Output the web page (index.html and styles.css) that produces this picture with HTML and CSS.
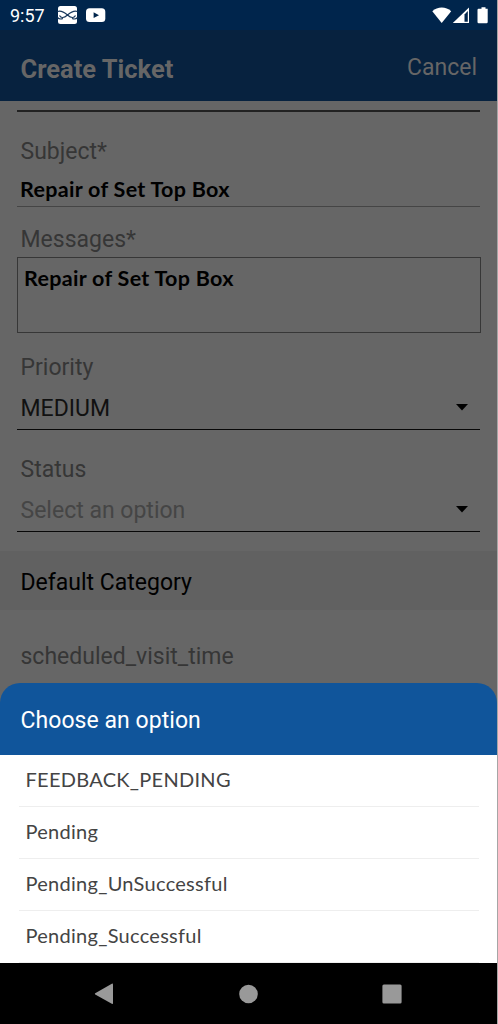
FILE: index.html
```html
<!DOCTYPE html>
<html lang="en">
<head>
<meta charset="utf-8">
<title>Create Ticket</title>
<link rel="stylesheet" href="styles.css">
</head>
<body>
<div class="phone">
  <div class="status-bar">
    <span class="clock">9:57</span>
    <svg class="notifications" width="50" height="20" viewBox="0 0 50 20">
      <rect x="1" y="0" width="19" height="18" rx="2.5" fill="#fff"/>
      <path d="M0.500 5.500C4 4 7 6 10.500 9S17 12.500 18.500 9.500M20.500 5.500C17 4 14 6 10.500 9S4 12.500 2.500 9.500M0.500 11.500C2 13.300 4 13.300 6 12.500M20.500 11.500C19 13.300 17 13.300 15 12.500" fill="none" stroke="#17375c" stroke-width="1.200"/>
      <rect x="29" y="2.300" width="19.300" height="13.800" rx="3.500" fill="#fff"/>
      <path d="M36.600 6.300v5.800l5.400-2.900z" fill="#00254c"/>
    </svg>
    <svg class="signals" width="57" height="20" viewBox="0 0 57 20">
      <path d="M0.300 4.300C5.500 -0.700 14 -0.700 19.200 4.300L9.700 16z" fill="#fff"/>
      <path d="M37 0.500V16H20.800z" fill="#fff"/>
      <path d="M32.500 7.500L35.800 4V14.800H32.500z" fill="#00254c"/>
      <path d="M46.500 1.800h3V.2h4v1.600h2.200V15q0 1.200-1.200 1.200h-7.800q-1.200 0-1.200-1.200V3q0-1.200 1-1.200z" fill="#fff"/>
    </svg>
  </div>
  <header class="header">
    <h1 class="title">Create Ticket</h1>
    <span class="cancel">Cancel</span>
  </header>
  <main class="form">
    <div class="previous-field"></div>
    <div class="label subject-label">Subject*</div>
    <div class="input"><span class="entry">Repair of Set Top Box</span></div>
    <div class="label messages-label">Messages*</div>
    <div class="textarea"><span class="entry">Repair of Set Top Box</span></div>
    <div class="label priority-label">Priority</div>
    <div class="select"><span>MEDIUM</span><svg class="caret" width="12" height="7" viewBox="0 0 12 7"><path d="M0 0h12L6 6.500z"/></svg></div>
    <div class="label status-label">Status</div>
    <div class="select"><span class="placeholder">Select an option</span><svg class="caret" width="12" height="7" viewBox="0 0 12 7"><path d="M0 0h12L6 6.500z"/></svg></div>
  </main>
  <div class="category">Default Category</div>
  <div class="visit">scheduled_visit_time</div>
  <section class="sheet">
    <div class="sheet-title">Choose an option</div>
    <ul class="options">
      <li class="option">FEEDBACK_PENDING</li>
      <li class="option">Pending</li>
      <li class="option">Pending_UnSuccessful</li>
      <li class="option">Pending_Successful</li>
    </ul>
  </section>
  <nav class="nav">
    <svg width="20" height="22" viewBox="0 0 20 22"><path d="M17.800.8Q19 .2 19 1.500v18.500q0 1.300-1.200.7L1.200 11.400q-.8-.6 0-1.200z"/></svg>
    <svg width="20" height="20" viewBox="0 0 20 20"><circle cx="10.500" cy="10" r="9.300"/></svg>
    <svg width="20" height="20" viewBox="0 0 20 20"><rect x=".4" y=".4" width="19.200" height="19.200" rx="1.500"/></svg>
  </nav>
</div>
</body>
</html>
```
FILE: styles.css
```css
* { box-sizing: border-box; }
body { margin: 0; background: #a6a6a6; }
.phone {
  width: 497px;
  height: 1024px;
  display: flex;
  flex-direction: column;
  background: #666;
  font-family: Roboto, "Liberation Sans", sans-serif;
  font-size: 23px;
  line-height: 30px;
  overflow: hidden;
  white-space: nowrap;
}
.phone > * { flex: none; }
.status-bar {
  height: 30px;
  padding: 0 8px 0 10px;
  display: flex;
  align-items: flex-start;
  background: #00254c;
  color: #fff;
}
.clock { width: 47px; font-size: 18px; line-height: 32px; }
.notifications { margin-top: 6px; }
.signals { margin: 7px 0 0 auto; }
.header {
  height: 71px;
  padding: 0 20px 0 20.500px;
  display: flex;
  justify-content: space-between;
  align-items: flex-start;
  background: #07223f;
  color: #666;
}
.title { margin: 24px 0 0; font-size: 25.500px; font-weight: 700; line-height: 30px; }
.cancel { margin-top: 23px; }
.form { padding: 0 17px; }
.previous-field { height: 11px; border-bottom: 2px solid #222; }
.label { padding-left: 3.500px; color: #363636; }
.subject-label { margin-top: 25px; }
.messages-label { margin-top: 18px; }
.priority-label { margin-top: 20px; }
.status-label { margin-top: 25px; }
.input { height: 40px; padding: 7px 0 0 3px; border-bottom: 1.500px solid #454545; }
.entry { display: inline-block; font-family: Lato, sans-serif; font-size: 21.500px; font-weight: 700; letter-spacing: .3px; color: #000; }
.textarea { height: 76px; margin: 2px -1px 0 0; padding: 5px 0 0 6px; border: 1.500px solid #373737; }
.select {
  height: 47px;
  padding: 11px 12px 0 3.500px;
  display: flex;
  justify-content: space-between;
  border-bottom: 1.500px solid #080808;
  color: #111;
}
.caret { margin-top: 10px; fill: #000; }
.placeholder { color: #454545; }
.category { height: 59px; margin-top: 19px; padding: 16px 20.500px 0; background: #616161; color: #000; }
.visit { height: 73px; padding: 32px 20.500px 0; color: #363636; }
.sheet { height: 280px; }
.sheet-title { height: 71.500px; padding: 22px 20.500px 0; border-radius: 20px 20px 0 0; background: #10559b; color: #fff; letter-spacing: .05px; }
.category, .sheet-title { line-height: 32px; }
.options { height: 208.500px; margin: 0; padding: 0 18px 0 19px; overflow: hidden; background: #fff; list-style: none; }
.option {
  height: 52.200px;
  padding: 9px 0 0 6.500px;
  border-bottom: 1.500px solid #eee;
  font-family: Lato, sans-serif;
  font-size: 20px;
  letter-spacing: .28px;
  color: #444;
}
.nav {
  height: 61px;
  padding: 0 95px 0 94px;
  display: flex;
  justify-content: space-between;
  align-items: center;
  background: #000;
  fill: #999;
}
```
